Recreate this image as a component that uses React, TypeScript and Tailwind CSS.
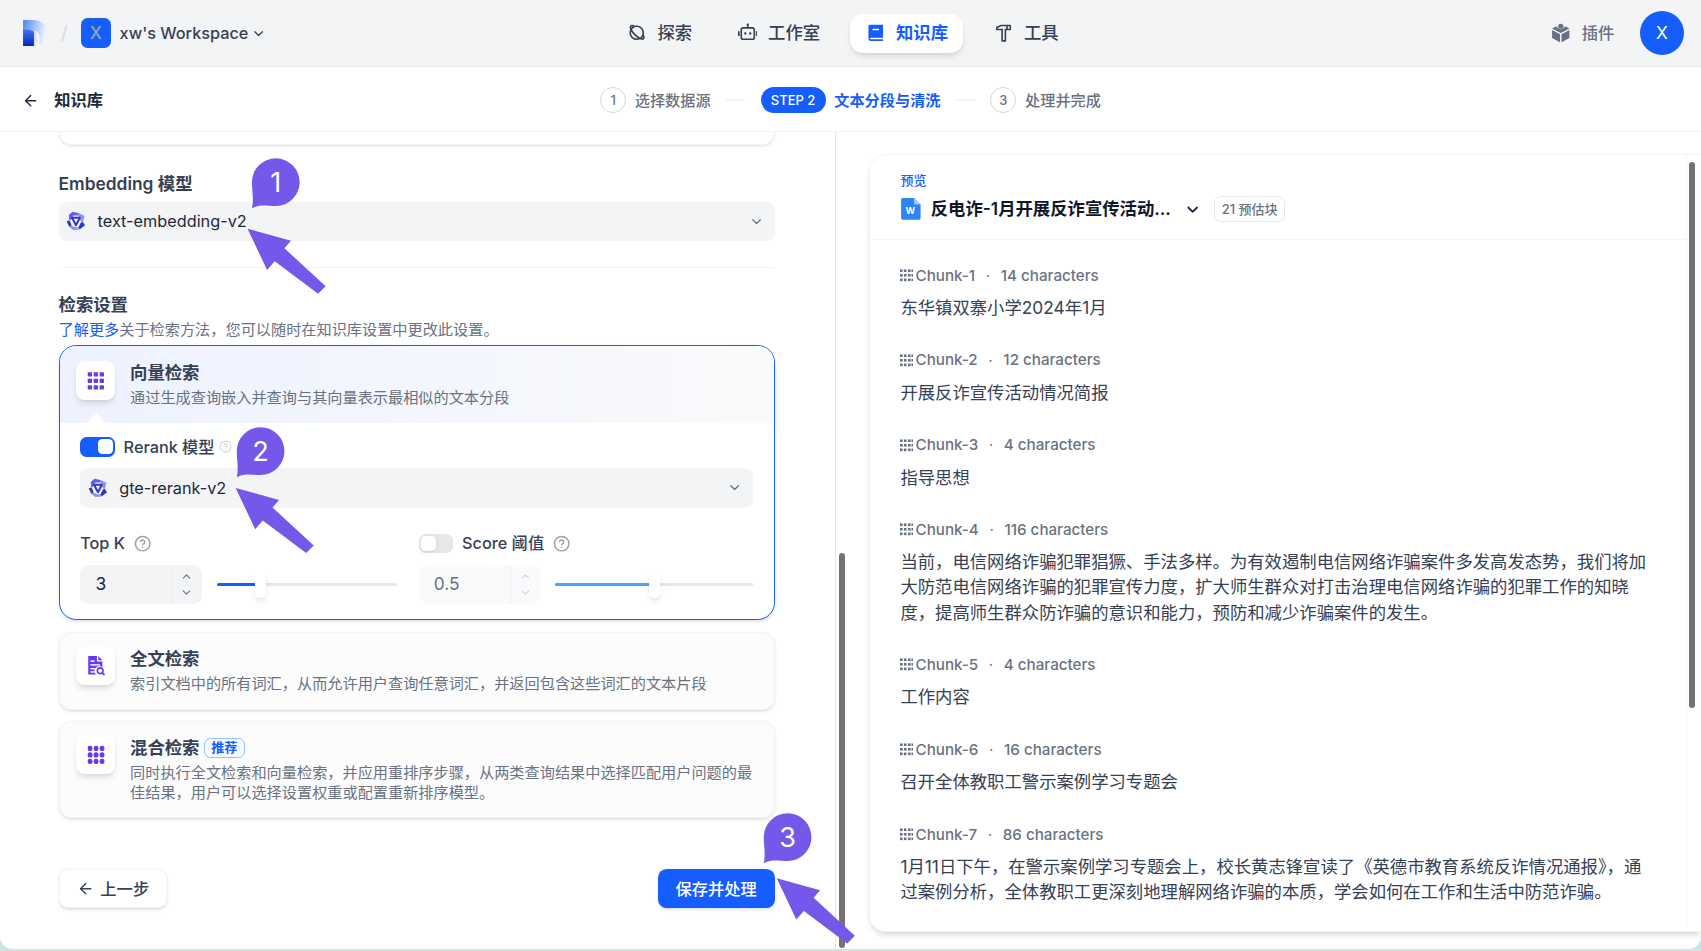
import { ArrowLeft, ChevronDown, ChevronUp, CircleHelp } from "lucide-react";
import { RiPlanetLine, RiRobot2Line, RiBook2Fill, RiHammerLine } from "react-icons/ri";

function Logo() {
  return (
    <svg viewBox="0 0 24 24" className="h-6 w-6 shrink-0">
      <defs>
        <linearGradient id="lg-a" x1="0" y1="0" x2="1" y2="0.2">
          <stop offset="0" stopColor="#4f86f0" />
          <stop offset="1" stopColor="#f0f4fd" />
        </linearGradient>
        <linearGradient id="lg-b" x1="0" y1="0" x2="0" y2="1">
          <stop offset="0" stopColor="#3b74ee" />
          <stop offset="1" stopColor="#0a26b8" />
        </linearGradient>
        <linearGradient id="lg-c" x1="0" y1="0" x2="1" y2="0">
          <stop offset="0" stopColor="#c6d6f8" />
          <stop offset="1" stopColor="#ffffff" />
        </linearGradient>
      </defs>
      <path d="M1 0h10c7 0 12 5 12 12s-4 12-12 12H1z" fill="url(#lg-a)" />
      <path d="M11 10c3 0 5 2 5 6v8h-5z" fill="url(#lg-c)" />
      <path d="M1 9c5 0 10 0 10 3v12H1z" fill="url(#lg-b)" />
    </svg>
  );
}

function ModelIcon() {
  return (
    <svg viewBox="0 0 20 20" className="h-5 w-5 shrink-0" fill="none" strokeLinejoin="round">
      <path d="M7 1.500 13 3 11.500 5 7.800 5 5.600 9 4 9.500 3.500 4.500z" fill="#5b5ee6" />
      <path d="M13 3 18 5.500 16.500 11 14.800 10.500 12.800 6.200 11.500 5z" fill="#8f92f7" />
      <path d="M16.500 11 18.500 14 13.500 18 12.500 16 14.600 11.500z" fill="#3338c0" />
      <path d="M12.500 16 13.500 18 7.500 18.500 4 15.500 6 14.500 10 16z" fill="#8f92f7" />
      <path d="M4 15.500 1.500 10.500 4 9.500 5.400 12.300 6 14.500z" fill="#3338c0" />
      <path d="M6.500 7.200h7.200L10.100 14z" stroke="#3338c0" strokeWidth="1.800" />
    </svg>
  );
}

function FileSearchGlyph() {
  return (
    <svg viewBox="0 0 20 20" className="h-5 w-5">
      <path d="M3 1h8v5h5v5.200a4.500 4.500 0 0 0-6.300 6.300l.4.500H3z" fill="#6938ef" />
      <path d="M12.300 1 16 4.800h-3.700z" fill="#6938ef" />
      <rect x="5" y="5" width="4" height="1.300" fill="#fff" />
      <rect x="5" y="8.500" width="9" height="1.300" fill="#fff" />
      <rect x="5" y="12" width="4" height="1.300" fill="#fff" />
      <rect x="5" y="15" width="4" height="1.300" fill="#fff" />
      <circle cx="14" cy="14.500" r="2.600" fill="none" stroke="#6938ef" strokeWidth="1.500" />
      <path d="m16 16.500 2 2" stroke="#6938ef" strokeWidth="1.500" />
    </svg>
  );
}

function VectorGlyph() {
  const cells = [0, 1, 2];
  return (
    <svg viewBox="0 0 20 20" className="h-5 w-5">
      {cells.map((r) =>
        cells.map((c) => (
          <rect key={`${r}-${c}`} x={2.5 + c * 5.5} y={2 + r * 6} width="4" height="4" rx="0.6" fill="#6938ef" />
        ))
      )}
    </svg>
  );
}

function HybridGlyph() {
  const cells = [0, 1, 2];
  return (
    <svg viewBox="0 0 20 20" className="h-5 w-5">
      {cells.map((r) =>
        cells.map((c) => (
          <rect key={`${r}-${c}`} x={2.5 + c * 5.5} y={1.5 + r * 6} width="4.4" height="5" rx="2" fill="#6938ef" />
        ))
      )}
    </svg>
  );
}

function ChunkGlyph() {
  const cols = [
    { x: 0, s: 2.4 },
    { x: 3.6, s: 2.4 },
    { x: 7.4, s: 2.4 },
    { x: 10.6, s: 1.4 },
  ];
  return (
    <svg viewBox="0 0 12 12" className="h-3 w-3 shrink-0">
      {cols.map((c, i) =>
        [0.4, 4.6, 8.8].map((y) => <rect key={`${i}-${y}`} x={c.x} y={y} width={c.s} height="2.4" fill="#676f83" />)
      )}
    </svg>
  );
}

function DocIcon() {
  return (
    <svg viewBox="0 0 18 20" className="h-5 w-5 shrink-0">
      <path d="M1.500 0H12l6 6v12.500a1.500 1.500 0 0 1-1.500 1.500h-15A1.500 1.500 0 0 1 0 18.500V1.500A1.500 1.500 0 0 1 1.500 0z" fill="#2e83f6" />
      <path d="M12 0l6 6h-4.500A1.500 1.500 0 0 1 12 4.500z" fill="#a9cdfb" />
      <text x="8.500" y="14.500" textAnchor="middle" fontSize="8.500" fontWeight="700" fill="#fff" fontFamily="Inter, sans-serif">
        W
      </text>
    </svg>
  );
}

function PluginIcon() {
  return (
    <svg viewBox="0 0 18 18" className="h-4.5 w-4.5 shrink-0" fill="#676f83">
      <circle cx="9" cy="3" r="2.400" />
      <path d="M4.500 3.200 7 4.800A3 3 0 0 0 11 4.800l2.500-1.600L17 5 9 9.300 1 5z" />
      <path d="M1 6.400l7.300 4v7.400L1 13.800zM17 6.400l-7.300 4v7.400l7.300-4z" />
    </svg>
  );
}

function NavItem({ icon, label, active }: { icon: React.ReactNode; label: string; active?: boolean }) {
  return (
    <div
      className={
        active
          ? "flex h-9 items-center gap-2.5 rounded-xl bg-white px-3.5 text-base font-semibold text-blue-600 shadow-md"
          : "flex h-9 items-center gap-2.5 px-3.5 text-base font-medium text-gray-700"
      }
    >
      {icon}
      <span>{label}</span>
    </div>
  );
}

function StepCircle({ n }: { n: number }) {
  return (
    <div className="flex h-6 w-6 items-center justify-center rounded-full border border-gray-300 text-xs font-medium text-gray-500">
      {n}
    </div>
  );
}

function ModelSelect({ name }: { name: string }) {
  return (
    <div className="flex h-9 items-center rounded-lg bg-gray-100 pl-1.5 pr-2.5">
      <ModelIcon />
      <span className="ml-2.5 flex-1 text-[15px] text-gray-800">{name}</span>
      <ChevronDown className="h-3.5 w-3.5 text-gray-500" />
    </div>
  );
}

function NumberBox({ value, dim }: { value: string; dim?: boolean }) {
  return (
    <div className={dim ? "flex h-9 w-28 shrink-0 items-center rounded-lg bg-gray-50" : "flex h-9 w-28 shrink-0 items-center rounded-lg bg-gray-100"}>
      <span className={dim ? "flex-1 pl-3.5 text-base text-gray-500" : "flex-1 pl-3.5 text-base text-gray-800"}>{value}</span>
      <div className="flex h-full w-7 flex-col items-center justify-center gap-0.5 border-l border-gray-200/60">
        <ChevronUp className={dim ? "h-3 w-3 text-gray-300" : "h-3 w-3 text-gray-500"} />
        <ChevronDown className={dim ? "h-3 w-3 text-gray-300" : "h-3 w-3 text-gray-500"} />
      </div>
    </div>
  );
}

function Slider({ fill, dim }: { fill: number; dim?: boolean }) {
  return (
    <div className="relative h-0.75 flex-1 rounded-full bg-gray-200">
      <div className={dim ? "h-full rounded-full bg-blue-400" : "h-full rounded-full bg-blue-600"} style={{ width: `${fill}%` }} />
      <div className="absolute top-1/2 h-6 w-2.5 -translate-y-1/2 rounded-sm bg-white shadow-md" style={{ left: `calc(${fill}% - 5px)` }} />
    </div>
  );
}

function Toggle({ on }: { on?: boolean }) {
  return on ? (
    <div className="flex h-4.5 w-8 shrink-0 items-center justify-end rounded-md bg-blue-600 p-0.5">
      <div className="h-3.5 w-3.5 rounded-sm bg-white" />
    </div>
  ) : (
    <div className="flex h-4.5 w-8 shrink-0 items-center rounded-md bg-gray-200 p-0.5">
      <div className="h-3.5 w-3.5 rounded-sm bg-white shadow-sm" />
    </div>
  );
}

function Tile({ children }: { children: React.ReactNode }) {
  return <div className="flex h-9 w-9 shrink-0 items-center justify-center rounded-lg bg-white shadow-md">{children}</div>;
}

function Chunk({ n, count, children }: { n: number; count: number; children: React.ReactNode }) {
  return (
    <div>
      <div className="flex h-5 items-center text-sm font-medium text-gray-500">
        <ChunkGlyph />
        <span className="ml-0.5">Chunk-{n}</span>
        <span className="mx-2.5 text-xs">·</span>
        <span>{count} characters</span>
      </div>
      <p className="mt-2 text-base leading-[1.45] text-gray-700">{children}</p>
    </div>
  );
}

function Bubble({ x, y, n }: { x: number; y: number; n: string }) {
  return (
    <g transform={`translate(${x} ${y})`}>
      <path d="M-22 24C-20 16-22 8-22 0A22 22 0 1 1 0 22C-8 22-14 20-22 24Z" fill="#7558ea" />
      <text x="0" y="9" textAnchor="middle" fontSize="25" fill="#fff" fontFamily="Inter, sans-serif">
        {n}
      </text>
    </g>
  );
}

function Arrow({ dx, dy }: { dx: number; dy: number }) {
  return (
    <polygon
      transform={`translate(${dx} ${dy})`}
      points="228,211 268,222 262,229 300,264 293,271 253,241 246,249"
      fill="#7558ea"
    />
  );
}

export default function App() {
  return (
    <div className="h-screen overflow-hidden bg-[#d0e3e6]">
      <div className="relative flex h-full flex-col font-['Inter','Noto_Sans_CJK_SC',sans-serif] [zoom:1.0849]">
        <header className="flex h-15.5 shrink-0 items-center border-b border-gray-200 bg-gray-100 pl-5 pr-4">
          <div className="flex w-136 shrink-0 items-center">
            <Logo />
            <span className="ml-3 text-lg font-light text-gray-300">/</span>
            <div className="ml-3 flex h-7 w-7 items-center justify-center rounded-md bg-blue-600 text-base font-medium text-gray-400">X</div>
            <span className="ml-2 text-[15px] font-medium text-gray-700">xw's Workspace</span>
            <ChevronDown className="ml-0.5 h-3.5 w-3.5 text-gray-700" />
          </div>
          <nav className="flex items-center gap-3.5">
            <NavItem icon={<RiPlanetLine className="h-4.5 w-4.5" />} label="探索" />
            <NavItem icon={<RiRobot2Line className="h-4.5 w-4.5" />} label="工作室" />
            <NavItem active icon={<RiBook2Fill className="h-4.5 w-4.5" />} label="知识库" />
            <NavItem icon={<RiHammerLine className="h-4.5 w-4.5" />} label="工具" />
          </nav>
          <div className="flex flex-1 items-center justify-end">
            <PluginIcon />
            <span className="ml-2.5 text-[15px] font-medium text-gray-500">插件</span>
            <div className="ml-6 flex h-10 w-10 items-center justify-center rounded-full bg-blue-600 text-base text-white">X</div>
          </div>
        </header>

        <div className="flex h-15 shrink-0 items-center border-b border-gray-100 bg-white px-5 pt-0.5">
          <div className="flex flex-1 items-center">
            <ArrowLeft className="h-4 w-4 text-gray-800" />
            <span className="ml-3.5 text-[15px] font-semibold text-gray-800">知识库</span>
          </div>
          <div className="flex items-center text-sm font-medium text-gray-500">
            <StepCircle n={1} />
            <span className="ml-2">选择数据源</span>
            <div className="mx-3.5 h-0.5 w-4.5 bg-gray-100" />
            <div className="flex h-6 w-15 items-center justify-center rounded-full bg-blue-600 text-xs font-medium text-white">STEP 2</div>
            <span className="ml-2 font-semibold text-blue-600">文本分段与清洗</span>
            <div className="mx-3.5 h-0.5 w-4.5 bg-gray-100" />
            <StepCircle n={3} />
            <span className="ml-2">处理并完成</span>
          </div>
          <div className="flex-1" />
        </div>

        <main className="mb-0.5 flex min-h-0 flex-1 overflow-hidden rounded-b-xl bg-white">
          <section className="w-[771px] shrink-0 overflow-hidden border-r border-gray-200 pl-13.5 pr-14">
            <div className="h-3 rounded-b-xl border border-t-0 border-gray-100 shadow-sm" />
            <div className="mt-6 text-base font-semibold leading-6 text-gray-700">Embedding 模型</div>
            <div className="mt-1">
              <ModelSelect name="text-embedding-v2" />
            </div>
            <div className="mt-6 h-px bg-gray-100" />
            <div className="mt-5.5 text-base font-semibold leading-6 text-gray-700">检索设置</div>
            <p className="mt-px text-sm leading-5 text-gray-500">
              <span className="text-blue-600">了解更多</span>关于检索方法，您可以随时在知识库设置中更改此设置。
            </p>

            <div className="mt-1 overflow-hidden rounded-2xl border border-blue-600 shadow-sm">
              <div className="relative flex h-[71px] gap-3.5 bg-linear-to-r from-indigo-50 to-gray-50 pl-3.75 pt-3.5">
                <Tile>
                  <VectorGlyph />
                </Tile>
                <div className="-mt-px">
                  <div className="text-base font-semibold leading-6 text-gray-700">向量检索</div>
                  <div className="mt-0.5 text-sm leading-4.5 text-gray-500">通过生成查询嵌入并查询与其向量表示最相似的文本分段</div>
                </div>
                <div className="absolute -bottom-1.5 left-7 h-3 w-3 rotate-45 bg-white" />
              </div>
              <div className="px-4.75 pb-3.5 pt-3">
                <div className="flex h-5 items-center">
                  <Toggle on />
                  <span className="ml-2 text-[15px] font-medium text-gray-700">Rerank 模型</span>
                  <CircleHelp className="ml-1 h-3 w-3 text-gray-300" />
                </div>
                <div className="mt-2.5">
                  <ModelSelect name="gte-rerank-v2" />
                </div>
                <div className="mt-5.75 flex gap-5">
                  <div className="w-73 shrink-0">
                    <div className="flex h-5 items-center text-[15px] font-medium text-gray-700">
                      Top K
                      <CircleHelp className="ml-2 h-4 w-4 text-gray-400" />
                    </div>
                    <div className="mt-2.5 flex items-center gap-3.5">
                      <NumberBox value="3" />
                      <Slider fill={24} />
                    </div>
                  </div>
                  <div className="flex-1">
                    <div className="flex h-5 items-center text-[15px] font-medium text-gray-700">
                      <Toggle />
                      <span className="ml-2">Score 阈值</span>
                      <CircleHelp className="ml-2 h-4 w-4 text-gray-400" />
                    </div>
                    <div className="mt-2.5 flex items-center gap-3.5">
                      <NumberBox value="0.5" dim />
                      <Slider fill={50} dim />
                    </div>
                  </div>
                </div>
              </div>
            </div>

            <div className="mt-2.75 flex gap-3.5 rounded-xl border border-gray-100 bg-gray-50/50 pb-3.5 pl-3.75 pr-3.5 pt-3 shadow-sm">
              <Tile>
                <FileSearchGlyph />
              </Tile>
              <div>
                <div className="text-base font-semibold leading-6 text-gray-700">全文检索</div>
                <div className="mt-0.5 text-sm leading-4.5 text-gray-500">索引文档中的所有词汇，从而允许用户查询任意词汇，并返回包含这些词汇的文本片段</div>
              </div>
            </div>

            <div className="mt-2.5 flex gap-3.5 rounded-xl border border-gray-100 bg-gray-50/50 pb-3.5 pl-3.75 pr-3.5 pt-3 shadow-sm">
              <Tile>
                <HybridGlyph />
              </Tile>
              <div>
                <div className="flex items-center gap-1 text-base font-semibold leading-6 text-gray-700">
                  混合检索
                  <span className="flex h-4.5 items-center rounded-md border border-blue-300 bg-blue-50/50 px-1.5 text-xs font-semibold text-blue-600">推荐</span>
                </div>
                <div className="mt-0.5 text-sm leading-4.5 text-gray-500">
                  同时执行全文检索和向量检索，并应用重排序步骤，从两类查询结果中选择匹配用户问题的最
                  <br />
                  佳结果，用户可以选择设置权重或配置重新排序模型。
                </div>
              </div>
            </div>

            <div className="mt-11.75 flex items-center justify-between">
              <div className="flex h-9 w-25 items-center justify-center gap-1.5 rounded-lg border border-gray-100 bg-white text-[15px] font-medium text-gray-700 shadow-sm">
                <ArrowLeft className="h-4 w-4" />
                上一步
              </div>
              <div className="flex h-9 w-27 items-center justify-center rounded-lg bg-blue-600 text-[15px] font-medium text-white shadow-sm">保存并处理</div>
            </div>
          </section>

          <div className="w-7.5 shrink-0 pl-0.5">
            <div className="mt-97 h-91 w-1.5 rounded-full bg-neutral-500" />
          </div>

          <section className="flex min-w-0 flex-1 flex-col pb-4 pt-5">
            <div className="flex min-h-0 flex-1 overflow-hidden rounded-l-2xl border-y border-l border-gray-100 shadow-md">
              <div className="min-w-0 flex-1 overflow-hidden">
                <div className="h-[78px] border-b border-gray-100 px-7 pt-4">
                  <div className="text-xs font-medium leading-4 text-blue-600">预览</div>
                  <div className="mt-1.5 flex items-center">
                    <DocIcon />
                    <span className="ml-2 text-base font-semibold text-gray-900">反电诈-1月开展反诈宣传活动...</span>
                    <ChevronDown className="ml-3 h-4 w-4 text-gray-800" strokeWidth={2.5} />
                    <span className="ml-3 flex h-6 items-center rounded-md border border-gray-200 px-1.5 text-xs font-medium text-gray-500">21 预估块</span>
                  </div>
                </div>
                <div className="flex flex-col gap-6.75 px-7 pt-5.75">
                  <Chunk n={1} count={14}>东华镇双寨小学2024年1月</Chunk>
                  <Chunk n={2} count={12}>开展反诈宣传活动情况简报</Chunk>
                  <Chunk n={3} count={4}>指导思想</Chunk>
                  <Chunk n={4} count={116}>
                    当前，电信网络诈骗犯罪猖獗、手法多样。为有效遏制电信网络诈骗案件多发高发态势，我们将加
                    <br />
                    大防范电信网络诈骗的犯罪宣传力度，扩大师生群众对打击治理电信网络诈骗的犯罪工作的知晓
                    <br />
                    度，提高师生群众防诈骗的意识和能力，预防和减少诈骗案件的发生。
                  </Chunk>
                  <Chunk n={5} count={4}>工作内容</Chunk>
                  <Chunk n={6} count={16}>召开全体教职工警示案例学习专题会</Chunk>
                  <Chunk n={7} count={86}>
                    1月11日下午，在警示案例学习专题会上，校长黄志锋宣读了《英德市教育系统反诈情况通报》，通
                    <br />
                    过案例分析，全体教职工更深刻地理解网络诈骗的本质，学会如何在工作和生活中防范诈骗。
                  </Chunk>
                </div>
              </div>
              <div className="w-3.5 shrink-0 border-l border-gray-100 pl-0.5 pt-1.5">
                <div className="h-126 w-1.5 rounded-full bg-neutral-500" />
              </div>
            </div>
          </section>
        </main>

        <svg viewBox="0 0 1568 877" className="pointer-events-none absolute inset-0 h-full w-full">
          <Arrow dx={0} dy={0} />
          <Arrow dx={-11} dy={239} />
          <Arrow dx={488} dy={599} />
          <Bubble x={254} y={168} n="1" />
          <Bubble x={240} y={416} n="2" />
          <Bubble x={726} y={772} n="3" />
        </svg>
      </div>
    </div>
  );
}
